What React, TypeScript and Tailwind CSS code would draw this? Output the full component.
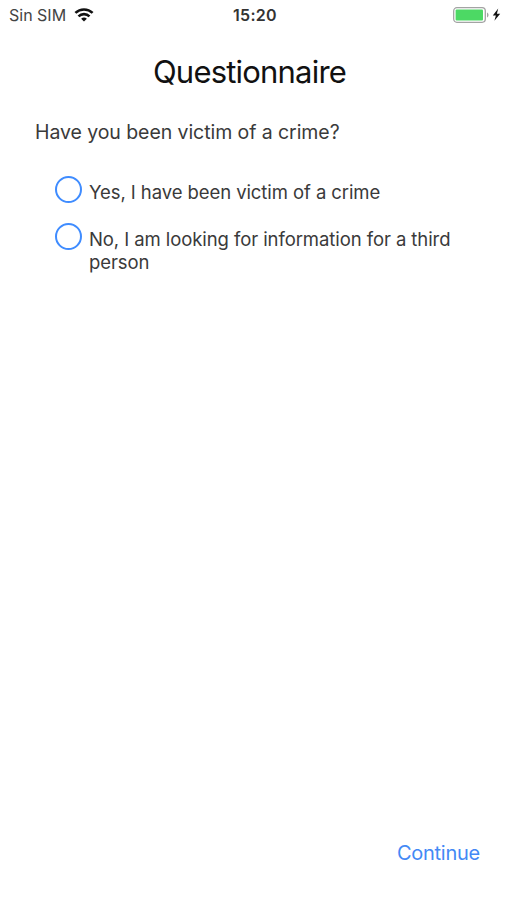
import { useState } from "react";

type Option = { id: string; label: string };

const options: Option[] = [
  { id: "yes", label: "Yes, I have been victim of a crime" },
  { id: "no", label: "No, I am looking for information for a third person" },
];

function WifiIcon() {
  return (
    <svg width="20" height="14" viewBox="0 0 20 14" fill="none" stroke="#111" strokeWidth="2.6">
      <path d="M1.4 4.9a12.4 12.4 0 0 1 17.2 0" />
      <path d="M4.5 8.4a7.9 7.9 0 0 1 11 0" />
      <path d="M10 13.6 7.1 10.8a4.2 4.2 0 0 1 5.8 0Z" fill="#111" stroke="none" />
    </svg>
  );
}

function BatteryIcon() {
  return (
    <svg width="48" height="16" viewBox="0 0 48 16">
      <rect x="0.7" y="0.7" width="31.6" height="14.6" rx="3.2" fill="#fff" stroke="#a3a3a3" strokeWidth="1.3" />
      <rect x="2.6" y="2.6" width="27.4" height="10.8" rx="1" fill="#4cd964" />
      <path d="M34 5.5c2 .8 2 4.2 0 5Z" fill="#a3a3a3" />
      <path d="M45.2 1.5 39.8 8.5h3.1l-1.5 5.2 5.8-7h-3.3Z" fill="#111" />
    </svg>
  );
}

function StatusBar() {
  return (
    <header className="grid h-[30px] grid-cols-3 items-center pr-[6px] pl-[9px] text-[16px] text-[#444]">
      <div className="flex items-center gap-[8px]">
        <span>Sin SIM</span>
        <WifiIcon />
      </div>
      <span className="-mt-px text-center font-semibold tracking-[0.3px] text-[#333]">15:20</span>
      <div className="flex justify-end">
        <BatteryIcon />
      </div>
    </header>
  );
}

export default function App() {
  const [answer, setAnswer] = useState("");

  return (
    <main className="flex h-screen flex-col bg-white font-['Inter',sans-serif] text-[#3a3a3a]">
      <StatusBar />
      <h1 className="mt-[22px] pr-[8px] text-center text-[31px] leading-[40px] tracking-[-0.8px] text-[#111]">
        Questionnaire
      </h1>
      <p className="mt-[28px] pl-[35px] text-[19.5px] leading-[24px] tracking-[-0.07px]">
        Have you been victim of a crime?
      </p>

      <div className="mt-[32px] space-y-[19px] pr-[40px] pl-[55px]">
        {options.map((o) => (
          <button
            key={o.id}
            onClick={() => setAnswer(o.id)}
            className="flex w-full items-start gap-[7px] text-left"
          >
            <span className="flex size-[27px] shrink-0 items-center justify-center rounded-full border-2 border-[#3f8cff]">
              {answer === o.id && <span className="size-3 rounded-full bg-[#3f8cff]" />}
            </span>
            <span className="pt-[5px] text-[18.5px] leading-[23px] tracking-[-0.08px]">{o.label}</span>
          </button>
        ))}
      </div>

      <footer className="mt-auto flex justify-end pr-[27px] pb-[35px]">
        <button className="text-[20px] leading-[24px] tracking-[-0.25px] text-[#4389f5]">Continue</button>
      </footer>
    </main>
  );
}
